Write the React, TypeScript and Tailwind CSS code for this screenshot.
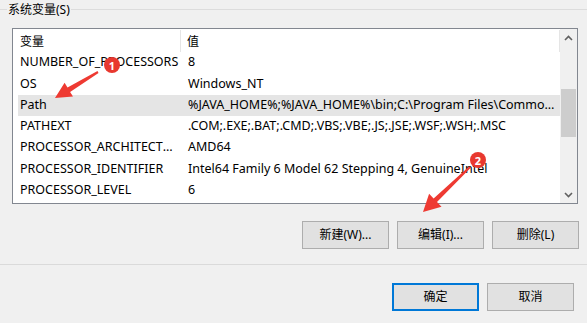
import React from 'react';

const rows = [
  { name: 'NUMBER_OF_PROCESSORS', value: '8' },
  { name: 'OS', value: 'Windows_NT' },
  { name: 'Path', value: '%JAVA_HOME%;%JAVA_HOME%\\bin;C:\\Program Files\\Common Files\\Oracle\\Java\\javapath', selected: true },
  { name: 'PATHEXT', value: '.COM;.EXE;.BAT;.CMD;.VBS;.VBE;.JS;.JSE;.WSF;.WSH;.MSC' },
  { name: 'PROCESSOR_ARCHITECTURE', value: 'AMD64' },
  { name: 'PROCESSOR_IDENTIFIER', value: 'Intel64 Family 6 Model 62 Stepping 4, GenuineIntel' },
  { name: 'PROCESSOR_LEVEL', value: '6' },
];

function Chevron({ up }: { up?: boolean }) {
  return (
    <svg width="9" height="6" viewBox="0 0 9 6">
      <polyline
        points={up ? '1,5 4.5,1.5 8,5' : '1,1 4.5,4.5 8,1'}
        fill="none"
        stroke="#606060"
        strokeWidth="1.6"
      />
    </svg>
  );
}

function WinButton({ label, primary }: { label: string; primary?: boolean }) {
  return (
    <button
      className={`w-[87px] h-[28px] bg-[#e1e1e1] text-[12px] text-black flex items-center justify-center ${
        primary ? 'border-2 border-[#0078d7]' : 'border border-[#adadad]'
      }`}
    >
      {label}
    </button>
  );
}

function Badge({ n }: { n: number }) {
  return (
    <div className="w-[16px] h-[16px] rounded-full bg-[#e8382f] text-white text-[11px] font-bold flex items-center justify-center leading-none">
      {n}
    </div>
  );
}

export default function App() {
  return (
    <div className="w-[587px] h-[323px] bg-[#f0f0f0] overflow-hidden relative text-black font-['Noto_Sans','Noto_Sans_CJK_SC',sans-serif]">
      {/* group box title */}
      <div className="flex items-center h-[19px]">
        <div className="w-[7px] h-px bg-[#dcdcdc]" />
        <span className="px-px text-[12px] leading-none">系统变量(S)</span>
        <div className="flex-1 h-px bg-[#dcdcdc]" />
      </div>

      {/* list view */}
      <div className="mt-[9px] ml-[12px] w-[566px] h-[176px] border border-[#828790] bg-white flex">
        <div className="flex-1 min-w-0 flex flex-col">
          <div className="h-[23px] flex items-center text-[12px]">
            <div className="w-[168px] pl-[7px] h-[22px] pt-[2px] flex items-center border-r border-[#e5e5e5]">变量</div>
            <div className="flex-1 pl-[6px] h-[22px] pt-[2px] flex items-center border-r border-[#e5e5e5]">值</div>
          </div>
          {rows.map((r) => (
            <div
              key={r.name}
              className={`ml-[5px] h-[21.3px] flex items-center text-[12.5px] ${r.selected ? 'bg-[#e5e5e5]' : ''}`}
            >
              <div className="w-[163px] pl-[2px] truncate">{r.name}</div>
              <div className="flex-1 min-w-0 pl-[7px] pr-[4px] truncate">{r.value}</div>
            </div>
          ))}
        </div>
        {/* scrollbar */}
        <div className="w-[17px] bg-[#f0f0f0] flex flex-col">
          <div className="h-[17px] flex items-center justify-center">
            <Chevron up />
          </div>
          <div className="flex-1">
            <div className="mt-[43px] mx-px h-[48px] bg-[#cdcdcd]" />
          </div>
          <div className="h-[17px] flex items-center justify-center">
            <Chevron />
          </div>
        </div>
      </div>

      {/* list actions */}
      <div className="mt-[17px] flex justify-end gap-[8px] pr-[8px]">
        <WinButton label="新建(W)..." />
        <WinButton label="编辑(I)..." />
        <WinButton label="删除(L)" />
      </div>

      <div className="mt-[15px] h-px bg-[#dadada]" />

      {/* dialog buttons */}
      <div className="mt-[18px] flex justify-end gap-[8px] pr-[13px]">
        <WinButton label="确定" primary />
        <WinButton label="取消" />
      </div>

      {/* annotations */}
      <svg className="absolute left-0 top-0 pointer-events-none" width="587" height="323">
        <polygon
          fill="#ee3a32"
          points="55,98 64.6,82.8 67.5,87.6 97.5,71.1 98.5,72.9 70.1,91.9 73,96.6"
        />
        <polygon
          fill="#ee3a32"
          points="423,212 429.1,193.7 433.6,198.4 469.3,166.3 470.7,167.7 437,202 441.5,206.7"
        />
      </svg>
      <div className="absolute left-[104px] top-[57px]">
        <Badge n={1} />
      </div>
      <div className="absolute left-[470px] top-[152px]">
        <Badge n={2} />
      </div>
    </div>
  );
}
